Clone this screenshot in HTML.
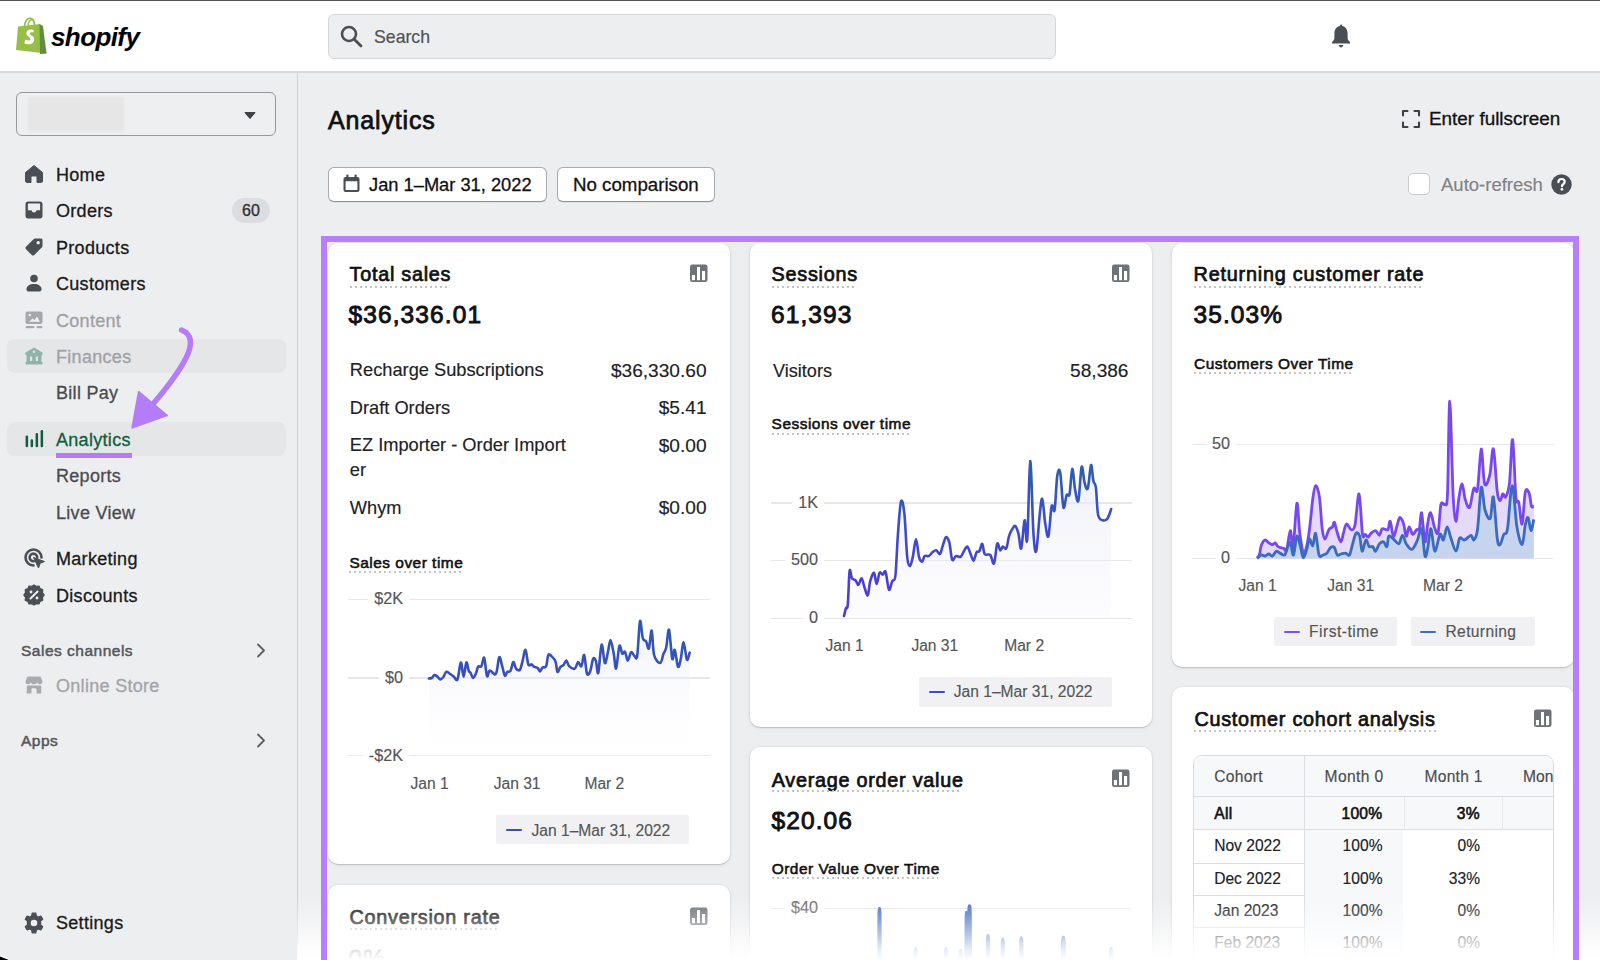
<!DOCTYPE html>
<html><head><meta charset="utf-8">
<style>
*{box-sizing:border-box;margin:0;padding:0}
html,body{width:1600px;height:960px;overflow:hidden}
body{font-family:"Liberation Sans",sans-serif;background:#edeef0;color:#1a1a1a;position:relative}
.abs{position:absolute;white-space:nowrap}
.t{position:absolute;white-space:nowrap;line-height:1;-webkit-text-stroke:0.15px currentColor}
#topline{position:absolute;left:0;top:0;width:1600px;height:1.2px;background:#4f5251}
#header{position:absolute;left:0;top:0;width:1600px;height:73px;background:#fff;border-bottom:2px solid #d9dadc}
#search{position:absolute;left:327.5px;top:13.5px;width:728px;height:45px;background:#edeef0;border:1.5px solid #d5d6d8;border-radius:6px}
#sidebar{position:absolute;left:0;top:73px;width:297.5px;height:887px;background:#edeef0;border-right:1.5px solid #cfd0d2}
.nav{position:absolute;left:56px;font-size:18px;color:#1a1a1a;white-space:nowrap;letter-spacing:0.3px;-webkit-text-stroke:0.3px currentColor}
.ico{position:absolute;left:24px;width:20px;height:20px}
.hl{position:absolute;left:7px;width:279px;height:33.5px;background:#e5e6e8;border-radius:8px}
.btn{position:absolute;height:35px;background:#fff;border:1.2px solid #a9aaad;border-bottom-color:#8f9093;border-radius:6px;box-shadow:0 1px 0 rgba(0,0,0,.05)}
.card{position:absolute;background:#fff;border-radius:10px;box-shadow:0 1px 1px rgba(0,0,0,.13),0 1px 4px rgba(0,0,0,.07),0 0 0 1px rgba(0,0,0,.025)}
.ct{position:absolute;font-size:19.5px;font-weight:700;color:#111;white-space:nowrap;border-bottom:2px dotted #c9c9c9;padding-bottom:1px}
.cv{position:absolute;font-size:26px;font-weight:700;color:#111;white-space:nowrap}
.row{position:absolute;font-size:18px;color:#222;white-space:nowrap}
.sub{position:absolute;font-size:15.5px;font-weight:700;color:#111;white-space:nowrap;border-bottom:2px dotted #cfcfcf}
.axis{position:absolute;font-size:15px;color:#555;white-space:nowrap}
.legend{position:absolute;height:30px;background:#f1f1f2;border-radius:3px;font-size:15.5px;color:#555;white-space:nowrap}
.barico{position:absolute;width:18px;height:18px;background:#6b6e73;border-radius:2px}
#fade{position:absolute;left:297px;top:898px;width:1303px;height:62px;background:linear-gradient(to bottom,rgba(255,255,255,0) 0%,rgba(255,255,255,.28) 30%,rgba(255,255,255,.86) 82%,#fff 100%)}
#purple{position:absolute;left:321px;top:236px;width:1258px;height:740px;border:6px solid #b77ffb}
</style></head>
<body>
<div id="header"></div>
<div id="topline"></div>
<!-- logo -->
<svg class="abs" style="left:15px;top:17px" width="34" height="38" viewBox="0 0 34 38">
  <path d="M3 9.5 L25 7 L31.5 36.5 L1 33 Z" fill="#95bf47"/>
  <path d="M24.5 7 L28 9 L31.5 36.5 L25 37 Z" fill="#5e8e3e"/>
  <path d="M9.5 9 C10 3 13 1 15.5 1.5 C18 2 19.5 5 19.5 8.5" fill="none" stroke="#95bf47" stroke-width="1.8"/>
  <path d="M13 8.5 C13.5 4.5 15 2.8 16.5 3" fill="none" stroke="#95bf47" stroke-width="1.5"/>
  <path d="M19 13.2 C17.8 12.4 16.2 12.2 14.6 12.6 C11.6 13.4 10.6 16.2 12.2 18.4 C13.4 20 15.6 20.6 15.4 22.4 C15.2 23.8 12.8 24 10.4 22.6 L9.2 26.2 C11.6 27.6 15.4 27.8 17.6 26 C20 24 19.6 20.8 17.4 19 C16 17.8 14.6 17.4 14.8 16.2 C15 15.2 16.6 14.8 18.2 15.6 Z" fill="#fff"/>
</svg>
<div class="abs" style="left:51px;top:22px;font-size:26px;font-weight:700;font-style:italic;color:#000;letter-spacing:-0.6px">shopify</div>
<div id="search"></div>
<svg class="abs" style="left:339px;top:24px" width="25" height="25" viewBox="0 0 25 25"><circle cx="10" cy="10" r="7" fill="none" stroke="#4a4f55" stroke-width="2.6"/><path d="M15 15 L22 22" stroke="#4a4f55" stroke-width="2.8" stroke-linecap="round"/></svg>
<div class="abs" style="left:374px;top:26.5px;font-size:17.7px;color:#505357;-webkit-text-stroke:0.2px #505357">Search</div>
<!-- bell -->
<svg class="abs" style="left:1329px;top:23px" width="24" height="26" viewBox="0 0 24 26"><path d="M12 1.5 C12.8 1.5 13 2.2 13 3 C16.5 3.6 18.6 6.6 18.6 10.4 L18.6 15 C18.6 16.8 19.8 18 21 19 L21 20.5 L3 20.5 L3 19 C4.2 18 5.4 16.8 5.4 15 L5.4 10.4 C5.4 6.6 7.5 3.6 11 3 C11 2.2 11.2 1.5 12 1.5 Z" fill="#4a4f55"/><path d="M9.6 22 C10 23.6 11 24.4 12 24.4 C13 24.4 14 23.6 14.4 22 Z" fill="#4a4f55"/></svg>
<div id="sidebar"></div>
<div class="abs" style="left:16px;top:91.5px;width:260px;height:44.5px;border:1.5px solid #97989b;border-radius:6px;background:#eeeff1"></div>
<div class="abs" style="left:28px;top:96.5px;width:96px;height:35.5px;background:#e6e6e7;border-radius:2px;filter:blur(0.8px)"></div>
<svg class="abs" style="left:244px;top:110.5px" width="12" height="9" viewBox="0 0 12 9"><path d="M1.2 1 L10.8 1 C11.4 1 11.6 1.6 11.3 2 L6.6 7.4 C6.3 7.8 5.7 7.8 5.4 7.4 L0.7 2 C0.4 1.6 0.6 1 1.2 1 Z" fill="#3f4247"/></svg>
<div class="hl" style="top:339px"></div>
<div class="hl" style="top:422px"></div>
<!-- icons -->
<svg class="abs" style="left:24px;top:164px" width="20" height="20" viewBox="0 0 20 20"><path d="M10 1.5 L18.5 8.5 L18.5 17 C18.5 18 17.8 18.5 17 18.5 L13 18.5 L13 13 C13 12.3 12.5 12 12 12 L8 12 C7.5 12 7 12.3 7 13 L7 18.5 L3 18.5 C2.2 18.5 1.5 18 1.5 17 L1.5 8.5 Z" fill="#4a4f55" stroke="#4a4f55" stroke-width="1" stroke-linejoin="round"/></svg>
<svg class="abs" style="left:24px;top:200px" width="20" height="20" viewBox="0 0 20 20"><path d="M4 1.5 L16 1.5 C17.5 1.5 18.5 2.5 18.5 4 L18.5 16 C18.5 17.5 17.5 18.5 16 18.5 L4 18.5 C2.5 18.5 1.5 17.5 1.5 16 L1.5 4 C1.5 2.5 2.5 1.5 4 1.5 Z" fill="#4a4f55"/><path d="M4.5 3.6 L15.5 3.6 C15.9 3.6 16.1 3.9 16.1 4.3 L16.1 10.2 L12.6 10.2 C12 11.8 11.1 12.4 10 12.4 C8.9 12.4 8 11.8 7.4 10.2 L3.9 10.2 L3.9 4.3 C3.9 3.9 4.1 3.6 4.5 3.6 Z" fill="#edeef0"/></svg>
<svg class="abs" style="left:24px;top:237px" width="20" height="20" viewBox="0 0 20 20"><path d="M11 1.5 L17 1.5 C17.8 1.5 18.5 2.2 18.5 3 L18.5 9 C18.5 9.5 18.3 9.9 18 10.2 L10.2 18 C9.5 18.7 8.5 18.7 7.8 18 L2 12.2 C1.3 11.5 1.3 10.5 2 9.8 L9.8 2 C10.1 1.7 10.5 1.5 11 1.5 Z" fill="#4a4f55"/><circle cx="14.2" cy="5.8" r="1.7" fill="#edeef0"/></svg>
<svg class="abs" style="left:24px;top:273px" width="20" height="20" viewBox="0 0 20 20"><circle cx="10" cy="5.5" r="3.8" fill="#4a4f55"/><path d="M2.5 16.2 C2.5 13 5.5 11 10 11 C14.5 11 17.5 13 17.5 16.2 C17.5 17.6 16.5 18.5 15 18.5 L5 18.5 C3.5 18.5 2.5 17.6 2.5 16.2 Z" fill="#4a4f55"/></svg>
<svg class="abs" style="left:24px;top:310px" width="20" height="20" viewBox="0 0 20 20"><path d="M3.5 1.5 L16.5 1.5 C17.6 1.5 18.5 2.4 18.5 3.5 L18.5 12 C18.5 13.1 17.6 14 16.5 14 L3.5 14 C2.4 14 1.5 13.1 1.5 12 L1.5 3.5 C1.5 2.4 2.4 1.5 3.5 1.5 Z" fill="#a6a7aa"/><path d="M5 11.8 L8.5 8.5 L10.5 10 L13 6.5 L16 11.8 Z" fill="#edeef0"/><circle cx="5.8" cy="5" r="1.3" fill="#edeef0"/><rect x="1.5" y="16" width="9" height="2.2" rx="1.1" fill="#a6a7aa"/><rect x="12.5" y="16" width="6" height="2.2" rx="1.1" fill="#a6a7aa"/></svg>
<svg class="abs" style="left:24px;top:346px" width="20" height="20" viewBox="0 0 20 20"><path d="M10 1.5 L18.5 6.5 L18.5 9 L1.5 9 L1.5 6.5 Z" fill="#8fb5a8"/><circle cx="10" cy="5.8" r="1.2" fill="#e3e4e6"/><rect x="2.5" y="9" width="15" height="8" fill="#8fb5a8"/><rect x="1.5" y="16" width="17" height="2.5" rx="1" fill="#8fb5a8"/><rect x="6" y="10.5" width="2.2" height="4.5" fill="#e3e4e6"/><rect x="11.8" y="10.5" width="2.2" height="4.5" fill="#e3e4e6"/></svg>
<svg class="abs" style="left:24px;top:429px" width="20" height="20" viewBox="0 0 20 20"><rect x="1.6" y="6.5" width="2.5" height="11.8" rx="1.2" fill="#0f5e3f"/><rect x="6.6" y="10.2" width="2.5" height="8.1" rx="1.2" fill="#0f5e3f"/><rect x="11.6" y="4" width="2.5" height="14.3" rx="1.2" fill="#0f5e3f"/><rect x="16.6" y="1" width="2.5" height="17.3" rx="1.2" fill="#0f5e3f"/></svg>
<svg class="abs" style="left:24px;top:548px" width="22" height="22" viewBox="0 0 22 22"><path d="M9.5 17.5 A8 8 0 1 1 17.5 9.5" fill="none" stroke="#4a4f55" stroke-width="2.6" stroke-linecap="round"/><path d="M9.8 13.2 A3.8 3.8 0 1 1 13.2 9.6" fill="none" stroke="#4a4f55" stroke-width="2.6" stroke-linecap="round"/><path d="M9.5 9.5 L20.5 13.5 L16.2 15.2 L14.5 20 Z" fill="#4a4f55" stroke="#4a4f55" stroke-width="1" stroke-linejoin="round"/></svg>
<svg class="abs" style="left:23px;top:584px" width="22" height="22" viewBox="0 0 22 22"><path d="M11 1 L13.3 2.6 L16 2.2 L17 4.8 L19.6 5.8 L19.3 8.6 L21 11 L19.3 13.4 L19.6 16.2 L17 17.2 L16 19.8 L13.3 19.4 L11 21 L8.7 19.4 L6 19.8 L5 17.2 L2.4 16.2 L2.7 13.4 L1 11 L2.7 8.6 L2.4 5.8 L5 4.8 L6 2.2 L8.7 2.6 Z" fill="#4a4f55" stroke="#4a4f55" stroke-width="1.5" stroke-linejoin="round"/><path d="M7.5 14.5 L14.5 7.5" stroke="#edeef0" stroke-width="2" stroke-linecap="round"/><circle cx="8" cy="8" r="1.4" fill="#edeef0"/><circle cx="14" cy="14" r="1.4" fill="#edeef0"/></svg>
<svg class="abs" style="left:24px;top:675px" width="20" height="20" viewBox="0 0 20 20"><path d="M3.5 1.5 L16.5 1.5 L18.5 6.5 C18.5 8.3 17.3 9.3 16 9.3 C14.6 9.3 13.5 8.3 13.3 7.2 C13 8.3 11.8 9.3 10 9.3 C8.2 9.3 7 8.3 6.7 7.2 C6.5 8.3 5.4 9.3 4 9.3 C2.7 9.3 1.5 8.3 1.5 6.5 Z" fill="#a9aaad"/><path d="M2.8 10.5 L17.2 10.5 L17.2 18.5 L12.6 18.5 L12.6 14.6 C12.6 13.8 12 13.2 11.2 13.2 L8.8 13.2 C8 13.2 7.4 13.8 7.4 14.6 L7.4 18.5 L2.8 18.5 Z" fill="#a9aaad"/></svg>
<svg class="abs" style="left:23px;top:912px" width="22" height="22" viewBox="0 0 22 22"><path d="M9.2 1.2 L12.8 1.2 L13.4 4 L15.2 5 L17.9 4.1 L19.7 7.2 L17.6 9.1 L17.6 12.9 L19.7 14.8 L17.9 17.9 L15.2 17 L13.4 18 L12.8 20.8 L9.2 20.8 L8.6 18 L6.8 17 L4.1 17.9 L2.3 14.8 L4.4 12.9 L4.4 9.1 L2.3 7.2 L4.1 4.1 L6.8 5 L8.6 4 Z" fill="#4a4f55" stroke="#4a4f55" stroke-width="1.2" stroke-linejoin="round"/><circle cx="11" cy="11" r="3.3" fill="#edeef0"/></svg>
<svg class="abs" style="left:256px;top:643px" width="10" height="15" viewBox="0 0 10 15"><path d="M2 1.5 L8 7.5 L2 13.5" fill="none" stroke="#5c5f62" stroke-width="1.8" stroke-linecap="round" stroke-linejoin="round"/></svg>
<svg class="abs" style="left:256px;top:733px" width="10" height="15" viewBox="0 0 10 15"><path d="M2 1.5 L8 7.5 L2 13.5" fill="none" stroke="#5c5f62" stroke-width="1.8" stroke-linecap="round" stroke-linejoin="round"/></svg>
<!-- nav text -->
<div class="nav" style="top:165px">Home</div>
<div class="nav" style="top:201px">Orders</div>
<div class="abs" style="left:232px;top:198px;width:38px;height:25px;border-radius:12.5px;background:#dcdde0;font-size:16px;color:#303030;text-align:center;line-height:25px;-webkit-text-stroke:0.3px #303030">60</div>
<div class="nav" style="top:238px">Products</div>
<div class="nav" style="top:274px">Customers</div>
<div class="nav" style="top:311px;color:#9fa0a3">Content</div>
<div class="nav" style="top:347px;color:#a0a1a4">Finances</div>
<div class="nav" style="top:383px;color:#4a4b4e">Bill Pay</div>
<div class="nav" style="top:430px;color:#0f5e3f">Analytics</div>
<div class="abs" style="left:56px;top:453px;width:76px;height:5px;background:#b57cf8"></div>
<div class="nav" style="top:466px;color:#4a4b4e">Reports</div>
<div class="nav" style="top:503px;color:#4a4b4e">Live View</div>
<div class="nav" style="top:549px">Marketing</div>
<div class="nav" style="top:586px">Discounts</div>
<div class="abs" style="left:21px;top:642px;font-size:15.5px;font-weight:400;color:#55575a;letter-spacing:0.5px;-webkit-text-stroke:0.5px #55575a">Sales channels</div>
<div class="nav" style="top:676px;color:#a3a4a7">Online Store</div>
<div class="abs" style="left:21px;top:732px;font-size:15.5px;font-weight:400;color:#55575a;letter-spacing:0.5px;-webkit-text-stroke:0.5px #55575a">Apps</div>
<div class="nav" style="top:913px">Settings</div>
<!-- arrow -->
<svg class="abs" style="left:120px;top:320px" width="90" height="120" viewBox="0 0 90 120"><path d="M61.5 10 C72 14 73 24 66 38 C58 54 45 70 33 84" fill="none" stroke="#b57cf8" stroke-width="5.5" stroke-linecap="round"/><path d="M18.8 72 L47 95.4 L12.3 107.6 Z" fill="#b57cf8" stroke="#b57cf8" stroke-width="2" stroke-linejoin="round"/></svg>

<!-- main header -->
<div class="abs" style="left:328px;top:106px;font-size:25px;font-weight:400;color:#111;letter-spacing:0.85px;-webkit-text-stroke:0.75px #111">Analytics</div>
<svg class="abs" style="left:1401px;top:109px" width="20" height="20" viewBox="0 0 20 20"><path d="M2 6.5 L2 2 L6.5 2 M13.5 2 L18 2 L18 6.5 M18 13.5 L18 18 L13.5 18 M6.5 18 L2 18 L2 13.5" fill="none" stroke="#3d4045" stroke-width="2.1" stroke-linecap="round" stroke-linejoin="round"/></svg>
<div class="abs" style="left:1429px;top:108px;font-size:18.9px;color:#111;-webkit-text-stroke:0.3px #111">Enter fullscreen</div>
<div class="btn" style="left:328px;top:167px;width:219px"></div>
<svg class="abs" style="left:342px;top:174px" width="19" height="19" viewBox="0 0 19 19"><rect x="1.5" y="3" width="16" height="15" rx="2" fill="#4a4f55"/><rect x="3.6" y="7.2" width="11.8" height="8.8" rx="0.5" fill="#fff"/><rect x="4.3" y="0.5" width="2.2" height="4" rx="1" fill="#4a4f55"/><rect x="12.5" y="0.5" width="2.2" height="4" rx="1" fill="#4a4f55"/></svg>
<div class="abs" style="left:369px;top:174px;font-size:18.3px;color:#111;-webkit-text-stroke:0.3px #111">Jan 1–Mar 31, 2022</div>
<div class="btn" style="left:557px;top:167px;width:158px"></div>
<div class="abs" style="left:573px;top:174px;font-size:18.7px;color:#111;-webkit-text-stroke:0.3px #111">No comparison</div>
<div class="abs" style="left:1408px;top:173px;width:22px;height:22px;border:1.5px solid #c9cacd;border-radius:5px;background:#fff"></div>
<div class="abs" style="left:1441px;top:174px;font-size:18.5px;color:#808184;-webkit-text-stroke:0.15px #808184">Auto-refresh</div>
<svg class="abs" style="left:1551px;top:174px" width="21" height="21" viewBox="0 0 21 21"><circle cx="10.5" cy="10.5" r="10.2" fill="#4a4f55"/><path d="M7.4 8.2 C7.4 6.3 8.8 5 10.6 5 C12.4 5 13.7 6.2 13.7 7.8 C13.7 9.2 12.9 9.8 11.9 10.5 C11.3 10.9 11 11.3 11 12.2" fill="none" stroke="#fff" stroke-width="2.2" stroke-linecap="round"/><circle cx="10.9" cy="15.3" r="1.35" fill="#fff"/></svg>
<!--CARDS-->
<div class="card" style="left:328px;top:243px;width:402px;height:621px"></div>
<div class="card" style="left:328px;top:885px;width:402px;height:200px"></div>
<div class="card" style="left:750px;top:243px;width:402px;height:484px"></div>
<div class="card" style="left:750px;top:747px;width:402px;height:300px"></div>
<div class="card" style="left:1172px;top:243px;width:402px;height:424px"></div>
<div class="card" style="left:1172px;top:687px;width:402px;height:400px"></div>
<div class="t" style="left:349.5px;top:265.4px;font-size:19.8px;font-weight:400;color:#111;-webkit-text-stroke:0.73px currentColor;letter-spacing:0.75px">Total sales</div>
<div class="abs" style="left:349.5px;top:285.7px;width:100.5px;height:2px;background-image:linear-gradient(to right,#c4c5c7 50%,transparent 50%);background-size:5px 2px"></div>
<svg class="abs" style="left:690px;top:264px" width="18" height="18" viewBox="0 0 18 18"><rect x="0" y="0.5" width="17.5" height="17.5" rx="2.2" fill="#6f7378"/><rect x="1.9" y="11" width="3.1" height="5.2" fill="#fff"/><rect x="7" y="3" width="3" height="13.2" fill="#fff"/><rect x="12" y="7" width="3.1" height="9.2" fill="#fff"/></svg>
<div class="t" style="left:348.5px;top:303.1px;font-size:24.5px;font-weight:400;color:#111;-webkit-text-stroke:0.91px currentColor;letter-spacing:1.1px">$36,336.01</div>
<div class="t" style="left:349.8px;top:361.4px;font-size:18.25px;font-weight:400;color:#202124;">Recharge Subscriptions</div>
<div class="t" style="right:893.5px;top:360.6px;font-size:19.1px;font-weight:400;color:#202124;">$36,330.60</div>
<div class="t" style="left:349.8px;top:399.2px;font-size:18.25px;font-weight:400;color:#202124;">Draft Orders</div>
<div class="t" style="right:893.5px;top:398.4px;font-size:19.1px;font-weight:400;color:#202124;">$5.41</div>
<div class="t" style="left:349.8px;top:436.3px;font-size:18.25px;font-weight:400;color:#202124;">EZ Importer - Order Import</div>
<div class="t" style="right:893.5px;top:435.5px;font-size:19.1px;font-weight:400;color:#202124;">$0.00</div>
<div class="t" style="left:349.8px;top:498.9px;font-size:18.25px;font-weight:400;color:#202124;">Whym</div>
<div class="t" style="right:893.5px;top:498.1px;font-size:19.1px;font-weight:400;color:#202124;">$0.00</div>
<div class="t" style="left:349.8px;top:461.4px;font-size:18.25px;font-weight:400;color:#202124;">er</div>
<div class="t" style="left:349.4px;top:554.5px;font-size:15.45px;font-weight:400;color:#111;-webkit-text-stroke:0.57px currentColor;letter-spacing:0.5px">Sales over time</div>
<div class="abs" style="left:349.4px;top:571.0px;width:111.6px;height:2px;background-image:linear-gradient(to right,#c4c5c7 50%,transparent 50%);background-size:5px 2px"></div>
<div class="abs" style="left:348px;top:598.8px;width:362px;height:1.3px;background:#e6e7e9"></div>
<div class="t" style="right:1191px;top:590.0px;padding:0 6px;background:#fff;font-size:16.2px;color:#555">$2K</div>
<div class="abs" style="left:348px;top:677.4px;width:362px;height:1.3px;background:#e6e7e9"></div>
<div class="t" style="right:1191px;top:668.6px;padding:0 6px;background:#fff;font-size:16.2px;color:#555">$0</div>
<div class="abs" style="left:348px;top:755.2px;width:362px;height:1.3px;background:#e6e7e9"></div>
<div class="t" style="right:1191px;top:746.5px;padding:0 6px;background:#fff;font-size:16.2px;color:#555">-$2K</div>
<div class="t" style="left:410.5px;top:775.8px;font-size:15.6px;font-weight:400;color:#555;">Jan 1</div>
<div class="t" style="left:493.7px;top:775.8px;font-size:15.6px;font-weight:400;color:#555;">Jan 31</div>
<div class="t" style="left:584.4px;top:775.8px;font-size:15.6px;font-weight:400;color:#555;">Mar 2</div>
<div class="abs" style="left:496px;top:814.5px;width:193px;height:29.5px;background:#f1f1f3;border-radius:2px"></div>
<div class="abs" style="left:506px;top:828.5px;width:16px;height:2.6px;background:#3b4fc4;border-radius:1px"></div>
<div class="t" style="left:531.5px;top:822.5px;font-size:15.6px;font-weight:400;color:#555;">Jan 1–Mar 31, 2022</div>
<svg class="abs" style="left:340px;top:600px" width="380" height="170" viewBox="0 0 380 170"><defs><linearGradient id="gs" x1="0" y1="0" x2="0" y2="1"><stop offset="0.15" stop-color="#eceef9" stop-opacity="0.55"/><stop offset="1" stop-color="#f5f5fb" stop-opacity="0"/></linearGradient><linearGradient id="ls" gradientUnits="userSpaceOnUse" x1="0" y1="20" x2="0" y2="80"><stop offset="0" stop-color="#2e5bb3"/><stop offset="1" stop-color="#3b4cc0"/></linearGradient></defs><path d="M88.9 78.4 C89.4 78.3 90.8 78.5 91.7 78.0 C92.6 77.5 93.2 75.5 94.1 75.2 C95.0 74.9 95.9 75.4 96.9 76.1 C97.9 76.8 99.1 79.2 100.2 79.4 C101.3 79.5 102.4 78.2 103.4 77.0 C104.4 75.8 105.1 72.4 106.2 71.9 C107.3 71.4 108.7 73.0 110.0 73.8 C111.3 74.5 112.5 75.7 113.8 76.6 C115.0 77.5 116.3 81.7 117.5 79.4 C118.7 77.0 119.8 63.0 120.8 62.5 C121.8 62.0 122.7 76.6 123.6 76.6 C124.5 76.6 125.5 63.4 126.4 62.5 C127.3 61.6 128.0 69.3 128.8 71.0 C129.5 72.7 129.9 71.6 130.6 72.8 C131.3 74.0 132.1 77.8 133.0 78.0 C133.9 78.2 135.0 75.6 135.8 73.8 C136.7 71.9 137.2 68.0 138.1 66.7 C139.0 65.5 140.4 67.7 141.4 66.2 C142.4 64.8 143.3 56.2 144.2 57.8 C145.1 59.4 146.1 74.0 147.0 76.1 C147.9 78.2 148.3 70.9 149.8 70.5 C151.3 70.1 154.3 76.0 155.9 73.8 C157.5 71.5 158.2 58.7 159.2 57.3 C160.2 55.9 161.1 62.2 162.0 65.3 C162.9 68.3 163.9 74.5 164.8 75.6 C165.7 76.7 166.2 72.7 167.2 71.9 C168.1 71.1 169.5 72.5 170.5 70.9 C171.5 69.2 172.4 62.4 173.3 62.0 C174.2 61.6 175.0 67.3 176.1 68.6 C177.2 69.9 178.8 71.0 179.8 70.0 C180.8 69.0 181.3 65.9 182.2 62.5 C183.2 59.1 184.5 49.5 185.5 49.8 C186.5 50.1 187.3 62.0 188.3 64.4 C189.3 66.8 190.7 64.0 191.6 64.4 C192.5 64.8 192.9 66.1 193.9 66.7 C194.9 67.3 196.7 67.3 197.7 68.1 C198.7 68.9 199.2 71.5 200.0 71.4 C200.8 71.3 201.3 68.6 202.3 67.7 C203.3 66.8 205.1 68.4 206.1 66.2 C207.1 64.1 207.4 56.6 208.4 55.0 C209.4 53.4 211.0 55.8 212.2 56.9 C213.4 58.0 214.6 59.1 215.5 61.6 C216.4 64.1 216.7 71.0 217.5 71.9 C218.3 72.8 219.3 68.4 220.3 67.2 C221.3 66.0 222.6 65.9 223.6 64.8 C224.6 63.7 225.5 60.4 226.4 60.6 C227.3 60.8 227.8 64.9 229.2 66.2 C230.6 67.6 233.3 69.3 234.8 68.6 C236.3 67.9 237.0 62.4 238.1 62.0 C239.2 61.6 240.4 67.4 241.4 66.2 C242.4 65.1 243.3 53.8 244.2 55.0 C245.1 56.2 246.0 71.1 247.0 73.8 C248.0 76.4 249.3 73.4 250.3 70.9 C251.3 68.4 252.2 60.4 253.1 58.8 C254.0 57.1 255.0 58.8 255.9 61.1 C256.8 63.4 257.3 75.5 258.3 72.8 C259.2 70.1 260.5 46.3 261.6 44.7 C262.7 43.1 263.8 61.6 264.8 63.0 C265.8 64.4 266.8 56.9 267.7 53.1 C268.7 49.3 269.5 39.9 270.5 40.0 C271.5 40.1 272.8 49.2 273.8 54.0 C274.7 58.8 275.2 69.9 276.1 68.6 C277.0 67.3 278.4 48.6 279.4 46.1 C280.4 43.6 281.3 52.7 282.2 53.6 C283.1 54.5 284.1 50.5 285.0 51.7 C285.9 52.9 286.8 60.5 287.8 60.6 C288.8 60.7 290.0 53.0 291.1 52.2 C292.2 51.4 293.4 55.3 294.4 55.9 C295.4 56.5 296.3 61.7 297.2 55.9 C298.1 50.1 299.1 24.2 300.0 21.2 C300.9 18.3 301.8 34.7 302.8 38.1 C303.8 41.5 305.1 39.7 306.1 41.4 C307.1 43.1 308.0 50.2 308.9 48.4 C309.8 46.6 310.8 29.5 311.7 30.6 C312.6 31.7 312.7 49.6 314.1 55.0 C315.5 60.4 318.7 63.2 320.2 63.0 C321.8 62.8 322.4 56.6 323.4 54.0 C324.4 51.4 325.3 51.5 326.2 47.5 C327.2 43.5 328.0 27.8 329.0 29.7 C330.0 31.6 331.3 55.4 332.3 58.8 C333.2 62.1 333.8 48.5 334.7 49.8 C335.7 51.1 337.0 65.2 338.0 66.7 C339.0 68.2 339.9 62.8 340.8 58.8 C341.7 54.7 342.6 42.1 343.6 42.3 C344.6 42.5 345.9 58.0 346.9 59.7 C347.9 61.4 349.2 53.9 349.7 52.7 L349.7 150 L88.9 150 Z" fill="url(#gs)"/><path d="M88.9 78.4 C89.4 78.3 90.8 78.5 91.7 78.0 C92.6 77.5 93.2 75.5 94.1 75.2 C95.0 74.9 95.9 75.4 96.9 76.1 C97.9 76.8 99.1 79.2 100.2 79.4 C101.3 79.5 102.4 78.2 103.4 77.0 C104.4 75.8 105.1 72.4 106.2 71.9 C107.3 71.4 108.7 73.0 110.0 73.8 C111.3 74.5 112.5 75.7 113.8 76.6 C115.0 77.5 116.3 81.7 117.5 79.4 C118.7 77.0 119.8 63.0 120.8 62.5 C121.8 62.0 122.7 76.6 123.6 76.6 C124.5 76.6 125.5 63.4 126.4 62.5 C127.3 61.6 128.0 69.3 128.8 71.0 C129.5 72.7 129.9 71.6 130.6 72.8 C131.3 74.0 132.1 77.8 133.0 78.0 C133.9 78.2 135.0 75.6 135.8 73.8 C136.7 71.9 137.2 68.0 138.1 66.7 C139.0 65.5 140.4 67.7 141.4 66.2 C142.4 64.8 143.3 56.2 144.2 57.8 C145.1 59.4 146.1 74.0 147.0 76.1 C147.9 78.2 148.3 70.9 149.8 70.5 C151.3 70.1 154.3 76.0 155.9 73.8 C157.5 71.5 158.2 58.7 159.2 57.3 C160.2 55.9 161.1 62.2 162.0 65.3 C162.9 68.3 163.9 74.5 164.8 75.6 C165.7 76.7 166.2 72.7 167.2 71.9 C168.1 71.1 169.5 72.5 170.5 70.9 C171.5 69.2 172.4 62.4 173.3 62.0 C174.2 61.6 175.0 67.3 176.1 68.6 C177.2 69.9 178.8 71.0 179.8 70.0 C180.8 69.0 181.3 65.9 182.2 62.5 C183.2 59.1 184.5 49.5 185.5 49.8 C186.5 50.1 187.3 62.0 188.3 64.4 C189.3 66.8 190.7 64.0 191.6 64.4 C192.5 64.8 192.9 66.1 193.9 66.7 C194.9 67.3 196.7 67.3 197.7 68.1 C198.7 68.9 199.2 71.5 200.0 71.4 C200.8 71.3 201.3 68.6 202.3 67.7 C203.3 66.8 205.1 68.4 206.1 66.2 C207.1 64.1 207.4 56.6 208.4 55.0 C209.4 53.4 211.0 55.8 212.2 56.9 C213.4 58.0 214.6 59.1 215.5 61.6 C216.4 64.1 216.7 71.0 217.5 71.9 C218.3 72.8 219.3 68.4 220.3 67.2 C221.3 66.0 222.6 65.9 223.6 64.8 C224.6 63.7 225.5 60.4 226.4 60.6 C227.3 60.8 227.8 64.9 229.2 66.2 C230.6 67.6 233.3 69.3 234.8 68.6 C236.3 67.9 237.0 62.4 238.1 62.0 C239.2 61.6 240.4 67.4 241.4 66.2 C242.4 65.1 243.3 53.8 244.2 55.0 C245.1 56.2 246.0 71.1 247.0 73.8 C248.0 76.4 249.3 73.4 250.3 70.9 C251.3 68.4 252.2 60.4 253.1 58.8 C254.0 57.1 255.0 58.8 255.9 61.1 C256.8 63.4 257.3 75.5 258.3 72.8 C259.2 70.1 260.5 46.3 261.6 44.7 C262.7 43.1 263.8 61.6 264.8 63.0 C265.8 64.4 266.8 56.9 267.7 53.1 C268.7 49.3 269.5 39.9 270.5 40.0 C271.5 40.1 272.8 49.2 273.8 54.0 C274.7 58.8 275.2 69.9 276.1 68.6 C277.0 67.3 278.4 48.6 279.4 46.1 C280.4 43.6 281.3 52.7 282.2 53.6 C283.1 54.5 284.1 50.5 285.0 51.7 C285.9 52.9 286.8 60.5 287.8 60.6 C288.8 60.7 290.0 53.0 291.1 52.2 C292.2 51.4 293.4 55.3 294.4 55.9 C295.4 56.5 296.3 61.7 297.2 55.9 C298.1 50.1 299.1 24.2 300.0 21.2 C300.9 18.3 301.8 34.7 302.8 38.1 C303.8 41.5 305.1 39.7 306.1 41.4 C307.1 43.1 308.0 50.2 308.9 48.4 C309.8 46.6 310.8 29.5 311.7 30.6 C312.6 31.7 312.7 49.6 314.1 55.0 C315.5 60.4 318.7 63.2 320.2 63.0 C321.8 62.8 322.4 56.6 323.4 54.0 C324.4 51.4 325.3 51.5 326.2 47.5 C327.2 43.5 328.0 27.8 329.0 29.7 C330.0 31.6 331.3 55.4 332.3 58.8 C333.2 62.1 333.8 48.5 334.7 49.8 C335.7 51.1 337.0 65.2 338.0 66.7 C339.0 68.2 339.9 62.8 340.8 58.8 C341.7 54.7 342.6 42.1 343.6 42.3 C344.6 42.5 345.9 58.0 346.9 59.7 C347.9 61.4 349.2 53.9 349.7 52.7" fill="none" stroke="url(#ls)" stroke-width="2.6" stroke-linejoin="round" stroke-linecap="round"/></svg>
<div class="t" style="left:349.5px;top:908.4px;font-size:19.8px;font-weight:400;color:#111;-webkit-text-stroke:0.73px currentColor;letter-spacing:0.75px">Conversion rate</div>
<div class="abs" style="left:349.5px;top:928.3px;width:149.5px;height:2px;background-image:linear-gradient(to right,#c4c5c7 50%,transparent 50%);background-size:5px 2px"></div>
<svg class="abs" style="left:690px;top:907px" width="18" height="18" viewBox="0 0 18 18"><rect x="0" y="0.5" width="17.5" height="17.5" rx="2.2" fill="#6f7378"/><rect x="1.9" y="11" width="3.1" height="5.2" fill="#fff"/><rect x="7" y="3" width="3" height="13.2" fill="#fff"/><rect x="12" y="7" width="3.1" height="9.2" fill="#fff"/></svg>
<div class="t" style="left:348.5px;top:946.8px;font-size:24.5px;font-weight:400;color:#111;-webkit-text-stroke:0.91px currentColor;letter-spacing:1.1px">0%</div>
<div class="t" style="left:771.6px;top:265.4px;font-size:19.8px;font-weight:400;color:#111;-webkit-text-stroke:0.73px currentColor;letter-spacing:0.75px">Sessions</div>
<div class="abs" style="left:771.6px;top:285.7px;width:84.4px;height:2px;background-image:linear-gradient(to right,#c4c5c7 50%,transparent 50%);background-size:5px 2px"></div>
<svg class="abs" style="left:1112px;top:264px" width="18" height="18" viewBox="0 0 18 18"><rect x="0" y="0.5" width="17.5" height="17.5" rx="2.2" fill="#6f7378"/><rect x="1.9" y="11" width="3.1" height="5.2" fill="#fff"/><rect x="7" y="3" width="3" height="13.2" fill="#fff"/><rect x="12" y="7" width="3.1" height="9.2" fill="#fff"/></svg>
<div class="t" style="left:771.0px;top:303.1px;font-size:24.5px;font-weight:400;color:#111;-webkit-text-stroke:0.91px currentColor;letter-spacing:1.1px">61,393</div>
<div class="t" style="left:773.0px;top:361.5px;font-size:18.1px;font-weight:400;color:#202124;">Visitors</div>
<div class="t" style="right:471.5px;top:360.6px;font-size:19.1px;font-weight:400;color:#202124;">58,386</div>
<div class="t" style="left:771.6px;top:416.3px;font-size:15.45px;font-weight:400;color:#111;-webkit-text-stroke:0.57px currentColor;letter-spacing:0.5px">Sessions over time</div>
<div class="abs" style="left:771.6px;top:432.5px;width:138.4px;height:2px;background-image:linear-gradient(to right,#c4c5c7 50%,transparent 50%);background-size:5px 2px"></div>
<div class="abs" style="left:770.5px;top:502.4px;width:361px;height:1.3px;background:#e6e7e9"></div>
<div class="t" style="right:776px;top:493.6px;padding:0 6px;background:#fff;font-size:16.2px;color:#555">1K</div>
<div class="abs" style="left:770.5px;top:559.9px;width:361px;height:1.3px;background:#e6e7e9"></div>
<div class="t" style="right:776px;top:551.1px;padding:0 6px;background:#fff;font-size:16.2px;color:#555">500</div>
<div class="abs" style="left:770.5px;top:617.6px;width:361px;height:1.3px;background:#e6e7e9"></div>
<div class="t" style="right:776px;top:608.9px;padding:0 6px;background:#fff;font-size:16.2px;color:#555">0</div>
<div class="t" style="left:825.5px;top:637.8px;font-size:15.6px;font-weight:400;color:#555;">Jan 1</div>
<div class="t" style="left:911.4px;top:637.8px;font-size:15.6px;font-weight:400;color:#555;">Jan 31</div>
<div class="t" style="left:1004.2px;top:637.8px;font-size:15.6px;font-weight:400;color:#555;">Mar 2</div>
<div class="abs" style="left:918.5px;top:676.5px;width:193.5px;height:30px;background:#f1f1f3;border-radius:2px"></div>
<div class="abs" style="left:928.5px;top:690.5px;width:16px;height:2.6px;background:#3b4fc4;border-radius:1px"></div>
<div class="t" style="left:953.8px;top:684.3px;font-size:15.6px;font-weight:400;color:#555;">Jan 1–Mar 31, 2022</div>
<svg class="abs" style="left:760px;top:450px" width="380" height="180" viewBox="0 0 380 180"><defs><linearGradient id="gs2" x1="0" y1="0" x2="0" y2="1"><stop offset="0" stop-color="#e8eaf8" stop-opacity="0.7"/><stop offset="1" stop-color="#f3f3fb" stop-opacity="0.2"/></linearGradient><linearGradient id="ls2" gradientUnits="userSpaceOnUse" x1="0" y1="20" x2="0" y2="165"><stop offset="0" stop-color="#2f5cb4"/><stop offset="1" stop-color="#5038dc"/></linearGradient></defs><path d="M84.0 166.0 C84.3 164.7 85.3 160.3 85.9 158.4 C86.5 156.5 87.1 160.9 87.8 154.7 C88.4 148.5 88.9 125.4 89.6 121.0 C90.3 116.6 90.9 126.8 91.9 128.4 C92.9 129.9 94.5 129.2 95.6 130.3 C96.7 131.4 97.4 135.3 98.4 135.0 C99.4 134.7 100.6 127.9 101.6 128.4 C102.6 128.9 103.6 135.0 104.6 137.8 C105.6 140.6 106.9 146.4 107.8 145.3 C108.7 144.2 109.2 135.0 110.2 131.2 C111.3 127.5 112.9 122.3 114.0 122.8 C115.1 123.3 115.7 134.0 116.6 134.0 C117.5 134.0 118.6 124.3 119.6 122.8 C120.6 121.2 121.8 124.9 122.8 124.7 C123.8 124.6 124.6 119.4 125.6 121.9 C126.6 124.4 127.9 138.1 129.0 139.7 C130.1 141.3 131.1 133.6 132.2 131.2 C133.3 128.9 134.5 133.1 135.4 125.6 C136.3 118.1 136.9 98.6 137.8 86.2 C138.7 73.9 139.9 55.4 141.0 51.6 C142.1 47.9 143.4 54.5 144.4 63.8 C145.4 73.0 146.3 98.1 147.2 106.9 C148.1 115.6 149.1 116.2 150.0 116.2 C150.9 116.2 151.8 111.4 152.8 106.9 C153.8 102.4 155.0 89.0 156.0 89.0 C157.0 89.0 158.0 103.1 159.0 106.9 C160.0 110.7 161.3 111.8 162.2 111.6 C163.1 111.5 163.5 106.9 164.6 106.0 C165.7 105.1 167.4 106.6 168.8 106.0 C170.1 105.4 171.2 103.2 172.5 102.2 C173.8 101.3 175.0 100.0 176.2 100.3 C177.5 100.6 178.9 104.8 180.0 104.0 C181.1 103.2 181.8 98.4 182.8 95.6 C183.8 92.8 184.9 87.7 186.0 87.2 C187.1 86.7 188.4 89.0 189.4 92.8 C190.4 96.5 191.1 107.5 192.2 109.7 C193.3 111.9 194.6 106.5 196.0 106.0 C197.4 105.5 199.2 107.8 200.6 106.9 C202.0 105.9 203.3 102.0 204.4 100.3 C205.5 98.6 206.3 96.3 207.2 96.6 C208.1 96.9 209.0 99.9 210.0 102.2 C211.0 104.5 212.3 110.6 213.4 110.6 C214.5 110.6 215.6 103.8 216.6 102.2 C217.6 100.6 218.5 102.7 219.4 101.2 C220.3 99.8 221.3 93.3 222.2 93.8 C223.1 94.2 223.4 102.1 224.7 104.0 C226.1 105.9 228.7 103.4 230.3 105.0 C231.8 106.6 232.8 115.3 234.0 113.4 C235.2 111.5 236.2 95.9 237.2 93.8 C238.3 91.6 239.3 99.8 240.2 100.3 C241.2 100.8 241.9 96.9 242.9 96.6 C243.9 96.3 245.2 100.1 246.2 98.4 C247.3 96.7 248.1 89.4 249.0 86.2 C249.9 83.1 250.9 81.4 251.9 79.7 C252.9 78.0 254.2 75.4 255.2 76.0 C256.3 76.6 257.4 79.7 258.4 83.4 C259.4 87.1 260.2 100.6 261.2 98.4 C262.3 96.2 263.6 71.7 264.6 70.3 C265.6 68.9 266.3 99.8 267.2 90.0 C268.2 80.2 269.2 12.5 270.2 11.2 C271.3 10.0 272.4 67.5 273.4 82.5 C274.4 97.5 275.2 104.1 276.2 101.2 C277.3 98.4 278.6 74.4 279.6 65.6 C280.6 56.9 281.3 47.5 282.2 48.8 C283.2 50.0 284.2 66.9 285.2 73.1 C286.3 79.4 287.3 89.1 288.4 86.2 C289.5 83.4 290.6 60.6 291.6 56.2 C292.6 51.9 293.7 65.0 294.6 60.0 C295.5 55.0 296.3 32.5 297.2 26.2 C298.2 20.0 299.2 17.3 300.2 22.5 C301.3 27.7 302.3 53.4 303.4 57.2 C304.5 60.9 305.6 47.2 306.6 45.0 C307.6 42.8 308.7 48.4 309.6 44.0 C310.5 39.6 311.3 19.4 312.2 18.8 C313.2 18.1 314.2 35.0 315.2 40.3 C316.3 45.6 317.3 54.5 318.4 50.6 C319.5 46.7 320.6 19.9 321.6 16.9 C322.6 13.9 323.6 29.2 324.6 32.8 C325.6 36.4 326.7 41.4 327.8 38.4 C328.9 35.4 330.1 16.2 331.0 15.0 C331.9 13.8 332.6 27.2 333.4 31.0 C334.2 34.8 335.1 31.9 335.9 37.5 C336.7 43.1 336.9 59.2 338.1 64.7 C339.2 70.2 341.2 69.7 342.8 70.3 C344.4 70.9 346.1 70.3 347.5 68.4 C348.9 66.5 350.6 60.6 351.2 59.0 L351.25 168 L84 168 Z" fill="url(#gs2)"/><path d="M84.0 166.0 C84.3 164.7 85.3 160.3 85.9 158.4 C86.5 156.5 87.1 160.9 87.8 154.7 C88.4 148.5 88.9 125.4 89.6 121.0 C90.3 116.6 90.9 126.8 91.9 128.4 C92.9 129.9 94.5 129.2 95.6 130.3 C96.7 131.4 97.4 135.3 98.4 135.0 C99.4 134.7 100.6 127.9 101.6 128.4 C102.6 128.9 103.6 135.0 104.6 137.8 C105.6 140.6 106.9 146.4 107.8 145.3 C108.7 144.2 109.2 135.0 110.2 131.2 C111.3 127.5 112.9 122.3 114.0 122.8 C115.1 123.3 115.7 134.0 116.6 134.0 C117.5 134.0 118.6 124.3 119.6 122.8 C120.6 121.2 121.8 124.9 122.8 124.7 C123.8 124.6 124.6 119.4 125.6 121.9 C126.6 124.4 127.9 138.1 129.0 139.7 C130.1 141.3 131.1 133.6 132.2 131.2 C133.3 128.9 134.5 133.1 135.4 125.6 C136.3 118.1 136.9 98.6 137.8 86.2 C138.7 73.9 139.9 55.4 141.0 51.6 C142.1 47.9 143.4 54.5 144.4 63.8 C145.4 73.0 146.3 98.1 147.2 106.9 C148.1 115.6 149.1 116.2 150.0 116.2 C150.9 116.2 151.8 111.4 152.8 106.9 C153.8 102.4 155.0 89.0 156.0 89.0 C157.0 89.0 158.0 103.1 159.0 106.9 C160.0 110.7 161.3 111.8 162.2 111.6 C163.1 111.5 163.5 106.9 164.6 106.0 C165.7 105.1 167.4 106.6 168.8 106.0 C170.1 105.4 171.2 103.2 172.5 102.2 C173.8 101.3 175.0 100.0 176.2 100.3 C177.5 100.6 178.9 104.8 180.0 104.0 C181.1 103.2 181.8 98.4 182.8 95.6 C183.8 92.8 184.9 87.7 186.0 87.2 C187.1 86.7 188.4 89.0 189.4 92.8 C190.4 96.5 191.1 107.5 192.2 109.7 C193.3 111.9 194.6 106.5 196.0 106.0 C197.4 105.5 199.2 107.8 200.6 106.9 C202.0 105.9 203.3 102.0 204.4 100.3 C205.5 98.6 206.3 96.3 207.2 96.6 C208.1 96.9 209.0 99.9 210.0 102.2 C211.0 104.5 212.3 110.6 213.4 110.6 C214.5 110.6 215.6 103.8 216.6 102.2 C217.6 100.6 218.5 102.7 219.4 101.2 C220.3 99.8 221.3 93.3 222.2 93.8 C223.1 94.2 223.4 102.1 224.7 104.0 C226.1 105.9 228.7 103.4 230.3 105.0 C231.8 106.6 232.8 115.3 234.0 113.4 C235.2 111.5 236.2 95.9 237.2 93.8 C238.3 91.6 239.3 99.8 240.2 100.3 C241.2 100.8 241.9 96.9 242.9 96.6 C243.9 96.3 245.2 100.1 246.2 98.4 C247.3 96.7 248.1 89.4 249.0 86.2 C249.9 83.1 250.9 81.4 251.9 79.7 C252.9 78.0 254.2 75.4 255.2 76.0 C256.3 76.6 257.4 79.7 258.4 83.4 C259.4 87.1 260.2 100.6 261.2 98.4 C262.3 96.2 263.6 71.7 264.6 70.3 C265.6 68.9 266.3 99.8 267.2 90.0 C268.2 80.2 269.2 12.5 270.2 11.2 C271.3 10.0 272.4 67.5 273.4 82.5 C274.4 97.5 275.2 104.1 276.2 101.2 C277.3 98.4 278.6 74.4 279.6 65.6 C280.6 56.9 281.3 47.5 282.2 48.8 C283.2 50.0 284.2 66.9 285.2 73.1 C286.3 79.4 287.3 89.1 288.4 86.2 C289.5 83.4 290.6 60.6 291.6 56.2 C292.6 51.9 293.7 65.0 294.6 60.0 C295.5 55.0 296.3 32.5 297.2 26.2 C298.2 20.0 299.2 17.3 300.2 22.5 C301.3 27.7 302.3 53.4 303.4 57.2 C304.5 60.9 305.6 47.2 306.6 45.0 C307.6 42.8 308.7 48.4 309.6 44.0 C310.5 39.6 311.3 19.4 312.2 18.8 C313.2 18.1 314.2 35.0 315.2 40.3 C316.3 45.6 317.3 54.5 318.4 50.6 C319.5 46.7 320.6 19.9 321.6 16.9 C322.6 13.9 323.6 29.2 324.6 32.8 C325.6 36.4 326.7 41.4 327.8 38.4 C328.9 35.4 330.1 16.2 331.0 15.0 C331.9 13.8 332.6 27.2 333.4 31.0 C334.2 34.8 335.1 31.9 335.9 37.5 C336.7 43.1 336.9 59.2 338.1 64.7 C339.2 70.2 341.2 69.7 342.8 70.3 C344.4 70.9 346.1 70.3 347.5 68.4 C348.9 66.5 350.6 60.6 351.2 59.0" fill="none" stroke="url(#ls2)" stroke-width="2.6" stroke-linejoin="round" stroke-linecap="round"/></svg>
<div class="t" style="left:771.7px;top:771.1px;font-size:19.8px;font-weight:400;color:#111;-webkit-text-stroke:0.73px currentColor;letter-spacing:0.75px">Average order value</div>
<div class="abs" style="left:771.7px;top:790.3px;width:188.3px;height:2px;background-image:linear-gradient(to right,#c4c5c7 50%,transparent 50%);background-size:5px 2px"></div>
<svg class="abs" style="left:1112px;top:769px" width="18" height="18" viewBox="0 0 18 18"><rect x="0" y="0.5" width="17.5" height="17.5" rx="2.2" fill="#6f7378"/><rect x="1.9" y="11" width="3.1" height="5.2" fill="#fff"/><rect x="7" y="3" width="3" height="13.2" fill="#fff"/><rect x="12" y="7" width="3.1" height="9.2" fill="#fff"/></svg>
<div class="t" style="left:771.5px;top:808.8px;font-size:24.5px;font-weight:400;color:#111;-webkit-text-stroke:0.91px currentColor;letter-spacing:1.1px">$20.06</div>
<div class="t" style="left:771.7px;top:861.3px;font-size:15.45px;font-weight:400;color:#111;-webkit-text-stroke:0.57px currentColor;letter-spacing:0.5px">Order Value Over Time</div>
<div class="abs" style="left:771.7px;top:877.0px;width:166.3px;height:2px;background-image:linear-gradient(to right,#c4c5c7 50%,transparent 50%);background-size:5px 2px"></div>
<div class="abs" style="left:771px;top:907.5px;width:360px;height:1.3px;background:#e6e7e9"></div>
<div class="t" style="right:776px;top:898.8px;padding:0 6px;background:#fff;font-size:16.2px;color:#707070">$40</div>
<svg class="abs" style="left:760px;top:890px" width="380" height="80" viewBox="0 0 380 80"><path d="M118.5 80 C118.5 20.3 118.5 18.3 119.5 18.3 C120.5 18.3 120.5 20.3 120.5 80" fill="none" stroke="#4a72c9" stroke-width="2.4"/><path d="M205.7 80 C205.7 24.0 205.7 22.0 206.5 22.0 C207.3 22.0 207.3 24.0 207.3 80" fill="none" stroke="#4a72c9" stroke-width="2.4"/><path d="M208.3 80 C208.3 17.4 208.3 15.4 209.5 15.4 C210.7 15.4 210.7 17.4 210.7 80" fill="none" stroke="#4a72c9" stroke-width="2.4"/><path d="M227.0 80 C227.0 47.0 227.0 45.0 228.0 45.0 C229.0 45.0 229.0 47.0 229.0 80" fill="none" stroke="#4a72c9" stroke-width="2.4"/><path d="M241.8 80 C241.8 50.7 241.8 48.7 242.8 48.7 C243.8 48.7 243.8 50.7 243.8 80" fill="none" stroke="#4a72c9" stroke-width="2.4"/><path d="M260.3 80 C260.3 49.5 260.3 47.5 261.3 47.5 C262.3 47.5 262.3 49.5 262.3 80" fill="none" stroke="#4a72c9" stroke-width="2.4"/><path d="M302.0 80 C302.0 48.8 302.0 46.8 303.3 46.8 C304.6 46.8 304.6 48.8 304.6 80" fill="none" stroke="#4a72c9" stroke-width="2.4"/><path d="M154.8 80 C154.8 60.0 154.8 58.0 155.6 58.0 C156.4 58.0 156.4 60.0 156.4 80" fill="none" stroke="#4a72c9" stroke-width="2.4"/><path d="M185.0 80 C185.0 60.0 185.0 58.0 186.0 58.0 C187.0 58.0 187.0 60.0 187.0 80" fill="none" stroke="#4a72c9" stroke-width="2.4"/><path d="M199.9 80 C199.9 62.0 199.9 60.0 200.7 60.0 C201.5 60.0 201.5 62.0 201.5 80" fill="none" stroke="#4a72c9" stroke-width="2.4"/><path d="M350.2 80 C350.2 60.0 350.2 58.0 351.0 58.0 C351.8 58.0 351.8 60.0 351.8 80" fill="none" stroke="#4a72c9" stroke-width="2.4"/></svg>
<div class="t" style="left:1193.6px;top:265.4px;font-size:19.8px;font-weight:400;color:#111;-webkit-text-stroke:0.73px currentColor;letter-spacing:0.8px">Returning customer rate</div>
<div class="abs" style="left:1194.4px;top:285.7px;width:229.6px;height:2px;background-image:linear-gradient(to right,#c4c5c7 50%,transparent 50%);background-size:5px 2px"></div>
<div class="t" style="left:1193.5px;top:303.1px;font-size:24.5px;font-weight:400;color:#111;-webkit-text-stroke:0.91px currentColor;letter-spacing:1.1px">35.03%</div>
<div class="t" style="left:1194.0px;top:356.1px;font-size:15.45px;font-weight:400;color:#111;-webkit-text-stroke:0.57px currentColor;letter-spacing:0.5px">Customers Over Time</div>
<div class="abs" style="left:1194.0px;top:372.0px;width:159.0px;height:2px;background-image:linear-gradient(to right,#c4c5c7 50%,transparent 50%);background-size:5px 2px"></div>
<div class="abs" style="left:1192.5px;top:443.6px;width:361px;height:1.3px;background:#e6e7e9"></div>
<div class="t" style="right:364px;top:434.8px;padding:0 6px;background:#fff;font-size:16.2px;color:#555">50</div>
<div class="abs" style="left:1192.5px;top:557.5px;width:361px;height:1.3px;background:#e6e7e9"></div>
<div class="t" style="right:364px;top:548.7px;padding:0 6px;background:#fff;font-size:16.2px;color:#555">0</div>
<div class="t" style="left:1238.5px;top:577.8px;font-size:15.6px;font-weight:400;color:#555;">Jan 1</div>
<div class="t" style="left:1327.3px;top:577.8px;font-size:15.6px;font-weight:400;color:#555;">Jan 31</div>
<div class="t" style="left:1423.0px;top:577.8px;font-size:15.6px;font-weight:400;color:#555;">Mar 2</div>
<div class="abs" style="left:1274px;top:617px;width:123px;height:29px;background:#f1f1f3;border-radius:2px"></div>
<div class="abs" style="left:1284px;top:630.5px;width:16px;height:2.6px;background:#7a4ef2;border-radius:1px"></div>
<div class="t" style="left:1309.0px;top:624.3px;font-size:15.6px;font-weight:400;color:#555;letter-spacing:0.5px">First-time</div>
<div class="abs" style="left:1410.5px;top:617px;width:124px;height:29px;background:#f1f1f3;border-radius:2px"></div>
<div class="abs" style="left:1420px;top:630.5px;width:16px;height:2.6px;background:#3d6cc2;border-radius:1px"></div>
<div class="t" style="left:1445.5px;top:624.3px;font-size:15.6px;font-weight:400;color:#555;letter-spacing:0.35px">Returning</div>
<svg class="abs" style="left:1250px;top:390px" width="300" height="180" viewBox="0 0 300 180"><path d="M7.1 167.8 C7.5 167.3 8.7 167.0 9.4 165.0 C10.1 163.0 10.3 158.1 11.2 155.6 C12.2 153.1 13.8 150.5 15.0 150.0 C16.2 149.5 17.5 152.0 18.8 152.8 C20.0 153.6 21.4 154.7 22.5 154.7 C23.6 154.7 24.4 152.5 25.3 152.8 C26.2 153.1 26.7 155.7 28.1 156.6 C29.5 157.5 32.3 157.8 33.8 158.4 C35.2 159.0 35.5 163.3 36.6 160.3 C37.7 157.3 39.2 141.1 40.3 140.6 C41.4 140.1 42.0 162.0 43.1 157.5 C44.2 153.0 45.8 115.9 46.9 113.4 C48.0 110.9 48.6 134.2 49.7 142.5 C50.8 150.8 52.2 161.2 53.4 163.1 C54.7 165.0 56.1 158.4 57.2 153.8 C58.3 149.1 59.1 142.5 60.0 135.0 C60.9 127.5 61.9 115.3 62.8 108.8 C63.7 102.2 64.5 95.9 65.6 95.6 C66.7 95.3 68.3 99.7 69.4 106.9 C70.5 114.1 71.3 131.7 72.2 138.8 C73.1 145.8 73.9 148.8 75.0 149.0 C76.1 149.2 77.5 141.7 78.8 139.7 C80.0 137.7 81.6 138.1 82.5 136.9 C83.4 135.6 83.6 131.3 84.4 132.2 C85.2 133.1 86.1 139.2 87.2 142.5 C88.3 145.8 89.8 152.0 90.9 151.9 C92.0 151.7 92.8 144.6 93.8 141.6 C94.7 138.6 95.3 134.3 96.6 134.0 C97.8 133.7 99.8 139.5 101.2 139.7 C102.7 139.9 103.7 141.0 105.0 135.0 C106.3 129.0 107.8 102.4 109.1 104.0 C110.3 105.6 111.5 137.7 112.5 144.4 C113.5 151.1 114.4 143.9 115.3 144.4 C116.2 144.9 117.2 147.4 118.1 147.2 C119.0 147.0 119.7 144.5 120.9 143.4 C122.2 142.3 124.2 140.3 125.6 140.6 C127.0 140.9 128.3 145.6 129.4 145.3 C130.5 145.0 130.8 139.7 132.2 138.8 C133.6 137.8 136.5 141.0 137.8 139.7 C139.1 138.5 139.3 130.2 140.2 131.2 C141.2 132.3 142.2 145.6 143.4 146.2 C144.6 146.9 146.2 138.1 147.2 135.0 C148.3 131.9 148.7 127.8 149.7 127.5 C150.7 127.2 152.3 130.0 153.4 133.1 C154.5 136.2 155.3 145.6 156.2 146.2 C157.2 146.9 158.0 137.2 159.1 136.9 C160.2 136.6 161.5 143.9 162.8 144.4 C164.0 144.9 165.5 140.6 166.6 139.7 C167.7 138.8 168.6 141.6 169.4 138.8 C170.2 135.9 170.7 120.6 171.6 122.8 C172.5 125.0 174.0 150.2 175.0 151.9 C176.0 153.6 176.9 138.0 177.8 133.1 C178.7 128.3 179.5 122.2 180.6 122.8 C181.7 123.4 183.2 133.6 184.4 136.9 C185.7 140.2 187.0 146.2 188.1 142.5 C189.2 138.8 189.8 119.1 190.9 114.4 C192.0 109.7 193.6 116.1 194.7 114.4 C195.8 112.7 196.7 121.2 197.5 104.0 C198.3 86.8 198.8 11.1 199.8 11.2 C200.7 11.4 202.1 85.0 203.1 105.0 C204.1 125.0 205.0 130.6 205.9 131.2 C206.8 131.9 207.7 115.0 208.8 108.8 C209.8 102.5 211.0 93.6 212.1 93.8 C213.2 93.9 214.0 105.8 215.3 109.7 C216.5 113.6 218.2 119.1 219.6 117.2 C221.0 115.3 222.4 101.4 223.8 98.4 C225.1 95.4 226.2 106.0 227.5 99.4 C228.8 92.8 230.1 59.9 231.2 59.0 C232.4 58.1 233.2 89.4 234.6 93.8 C236.0 98.1 238.2 91.1 239.7 85.3 C241.2 79.5 242.2 56.3 243.4 59.0 C244.7 61.7 246.1 92.6 247.2 101.2 C248.3 109.9 249.1 110.1 250.0 110.6 C250.9 111.1 251.9 104.6 252.8 104.0 C253.7 103.4 254.5 108.6 255.6 106.9 C256.7 105.2 258.2 103.3 259.4 93.8 C260.6 84.2 261.5 47.5 262.6 49.7 C263.7 51.9 264.9 96.4 265.9 106.9 C266.9 117.4 267.7 108.0 268.8 112.5 C269.8 117.0 271.0 135.7 272.1 134.0 C273.2 132.3 274.1 107.3 275.3 102.2 C276.5 97.0 278.1 100.8 279.1 103.1 C280.1 105.4 280.7 114.1 281.5 116.2 C282.3 118.4 283.4 116.2 283.8 116.2 L283.75 168.39999999999998 L7.1 168.39999999999998 Z" fill="#e6dafc"/><path d="M7.1 168.4 C7.8 167.8 9.9 165.4 11.2 165.0 C12.6 164.6 13.8 166.2 15.0 166.0 C16.2 165.8 17.5 164.0 18.8 164.0 C20.0 164.0 21.2 166.5 22.5 166.0 C23.8 165.5 25.0 161.7 26.2 161.2 C27.5 160.8 28.6 162.5 30.0 163.1 C31.4 163.7 33.5 165.9 34.7 165.0 C36.0 164.1 36.6 159.5 37.5 157.5 C38.4 155.5 39.3 151.5 40.3 152.8 C41.3 154.0 42.4 166.1 43.5 165.0 C44.6 163.9 45.8 147.8 46.9 146.2 C48.0 144.7 49.2 152.0 50.2 155.6 C51.3 159.2 52.2 167.5 53.4 167.8 C54.6 168.1 56.2 160.6 57.2 157.5 C58.2 154.4 58.7 149.3 59.6 149.0 C60.5 148.7 61.8 156.5 62.8 155.6 C63.8 154.7 64.6 141.8 65.6 143.4 C66.6 145.0 67.8 161.4 69.0 165.0 C70.2 168.6 71.8 165.3 73.1 165.0 C74.4 164.7 75.7 164.4 76.9 163.1 C78.2 161.9 79.3 158.4 80.6 157.5 C81.8 156.6 83.3 156.2 84.4 157.5 C85.5 158.8 86.1 163.9 87.2 165.0 C88.3 166.1 89.5 164.3 90.9 164.0 C92.3 163.7 94.2 162.9 95.6 163.1 C97.0 163.3 98.3 166.2 99.4 165.0 C100.5 163.8 101.1 159.2 102.2 155.6 C103.3 152.0 104.7 145.0 105.9 143.4 C107.2 141.8 108.7 143.3 109.7 146.2 C110.7 149.2 111.1 160.6 112.1 161.2 C113.1 161.9 114.7 150.8 115.9 150.0 C117.1 149.2 117.9 155.5 119.1 156.6 C120.2 157.7 121.7 155.8 122.8 156.6 C123.9 157.4 124.5 161.7 125.6 161.2 C126.7 160.8 128.1 155.3 129.4 153.8 C130.7 152.2 132.2 151.4 133.5 151.9 C134.8 152.4 136.0 157.5 136.9 156.6 C137.8 155.7 137.7 147.5 138.8 146.2 C139.8 145.0 141.7 147.8 143.4 149.0 C145.1 150.2 147.2 154.4 148.8 153.8 C150.3 153.1 151.2 145.3 152.5 145.3 C153.8 145.3 154.7 151.4 156.2 153.8 C157.8 156.1 160.0 160.0 161.9 159.4 C163.8 158.8 165.9 153.4 167.5 150.0 C169.1 146.6 170.3 136.1 171.6 138.8 C172.8 141.4 174.0 162.9 175.0 166.0 C176.0 169.1 176.8 162.0 177.8 157.5 C178.8 153.0 179.8 138.1 181.0 138.8 C182.2 139.4 183.2 160.3 184.8 161.2 C186.2 162.2 188.6 146.3 190.0 144.4 C191.4 142.5 192.2 151.2 193.4 150.0 C194.6 148.8 195.8 137.2 197.1 136.9 C198.3 136.6 199.4 144.0 200.9 148.1 C202.4 152.2 204.5 161.2 206.0 161.2 C207.5 161.2 208.3 150.0 209.7 148.1 C211.1 146.2 212.5 150.5 214.4 150.0 C216.3 149.5 219.4 145.3 221.0 145.3 C222.6 145.3 222.7 150.9 223.8 150.0 C224.8 149.1 226.2 148.5 227.5 139.7 C228.8 131.0 230.0 100.8 231.2 97.5 C232.5 94.2 233.5 114.9 235.0 120.0 C236.5 125.1 238.8 130.6 240.2 128.4 C241.7 126.2 242.2 103.6 243.4 106.9 C244.6 110.2 246.1 140.1 247.2 148.1 C248.3 156.1 248.9 155.3 250.0 154.7 C251.1 154.1 252.5 147.1 253.8 144.4 C255.0 141.7 256.1 146.9 257.5 138.8 C258.9 130.6 260.6 95.9 262.2 95.6 C263.8 95.3 265.3 127.0 266.9 136.9 C268.6 146.7 270.7 155.0 272.1 154.7 C273.5 154.4 274.3 139.5 275.3 135.0 C276.3 130.5 277.1 126.6 278.1 127.5 C279.0 128.4 280.1 140.3 281.0 140.6 C281.9 140.9 283.3 131.3 283.8 129.4 L283.75 168.39999999999998 L7.1 168.39999999999998 Z" fill="#c7d4ee"/><path d="M7.1 167.8 C7.5 167.3 8.7 167.0 9.4 165.0 C10.1 163.0 10.3 158.1 11.2 155.6 C12.2 153.1 13.8 150.5 15.0 150.0 C16.2 149.5 17.5 152.0 18.8 152.8 C20.0 153.6 21.4 154.7 22.5 154.7 C23.6 154.7 24.4 152.5 25.3 152.8 C26.2 153.1 26.7 155.7 28.1 156.6 C29.5 157.5 32.3 157.8 33.8 158.4 C35.2 159.0 35.5 163.3 36.6 160.3 C37.7 157.3 39.2 141.1 40.3 140.6 C41.4 140.1 42.0 162.0 43.1 157.5 C44.2 153.0 45.8 115.9 46.9 113.4 C48.0 110.9 48.6 134.2 49.7 142.5 C50.8 150.8 52.2 161.2 53.4 163.1 C54.7 165.0 56.1 158.4 57.2 153.8 C58.3 149.1 59.1 142.5 60.0 135.0 C60.9 127.5 61.9 115.3 62.8 108.8 C63.7 102.2 64.5 95.9 65.6 95.6 C66.7 95.3 68.3 99.7 69.4 106.9 C70.5 114.1 71.3 131.7 72.2 138.8 C73.1 145.8 73.9 148.8 75.0 149.0 C76.1 149.2 77.5 141.7 78.8 139.7 C80.0 137.7 81.6 138.1 82.5 136.9 C83.4 135.6 83.6 131.3 84.4 132.2 C85.2 133.1 86.1 139.2 87.2 142.5 C88.3 145.8 89.8 152.0 90.9 151.9 C92.0 151.7 92.8 144.6 93.8 141.6 C94.7 138.6 95.3 134.3 96.6 134.0 C97.8 133.7 99.8 139.5 101.2 139.7 C102.7 139.9 103.7 141.0 105.0 135.0 C106.3 129.0 107.8 102.4 109.1 104.0 C110.3 105.6 111.5 137.7 112.5 144.4 C113.5 151.1 114.4 143.9 115.3 144.4 C116.2 144.9 117.2 147.4 118.1 147.2 C119.0 147.0 119.7 144.5 120.9 143.4 C122.2 142.3 124.2 140.3 125.6 140.6 C127.0 140.9 128.3 145.6 129.4 145.3 C130.5 145.0 130.8 139.7 132.2 138.8 C133.6 137.8 136.5 141.0 137.8 139.7 C139.1 138.5 139.3 130.2 140.2 131.2 C141.2 132.3 142.2 145.6 143.4 146.2 C144.6 146.9 146.2 138.1 147.2 135.0 C148.3 131.9 148.7 127.8 149.7 127.5 C150.7 127.2 152.3 130.0 153.4 133.1 C154.5 136.2 155.3 145.6 156.2 146.2 C157.2 146.9 158.0 137.2 159.1 136.9 C160.2 136.6 161.5 143.9 162.8 144.4 C164.0 144.9 165.5 140.6 166.6 139.7 C167.7 138.8 168.6 141.6 169.4 138.8 C170.2 135.9 170.7 120.6 171.6 122.8 C172.5 125.0 174.0 150.2 175.0 151.9 C176.0 153.6 176.9 138.0 177.8 133.1 C178.7 128.3 179.5 122.2 180.6 122.8 C181.7 123.4 183.2 133.6 184.4 136.9 C185.7 140.2 187.0 146.2 188.1 142.5 C189.2 138.8 189.8 119.1 190.9 114.4 C192.0 109.7 193.6 116.1 194.7 114.4 C195.8 112.7 196.7 121.2 197.5 104.0 C198.3 86.8 198.8 11.1 199.8 11.2 C200.7 11.4 202.1 85.0 203.1 105.0 C204.1 125.0 205.0 130.6 205.9 131.2 C206.8 131.9 207.7 115.0 208.8 108.8 C209.8 102.5 211.0 93.6 212.1 93.8 C213.2 93.9 214.0 105.8 215.3 109.7 C216.5 113.6 218.2 119.1 219.6 117.2 C221.0 115.3 222.4 101.4 223.8 98.4 C225.1 95.4 226.2 106.0 227.5 99.4 C228.8 92.8 230.1 59.9 231.2 59.0 C232.4 58.1 233.2 89.4 234.6 93.8 C236.0 98.1 238.2 91.1 239.7 85.3 C241.2 79.5 242.2 56.3 243.4 59.0 C244.7 61.7 246.1 92.6 247.2 101.2 C248.3 109.9 249.1 110.1 250.0 110.6 C250.9 111.1 251.9 104.6 252.8 104.0 C253.7 103.4 254.5 108.6 255.6 106.9 C256.7 105.2 258.2 103.3 259.4 93.8 C260.6 84.2 261.5 47.5 262.6 49.7 C263.7 51.9 264.9 96.4 265.9 106.9 C266.9 117.4 267.7 108.0 268.8 112.5 C269.8 117.0 271.0 135.7 272.1 134.0 C273.2 132.3 274.1 107.3 275.3 102.2 C276.5 97.0 278.1 100.8 279.1 103.1 C280.1 105.4 280.7 114.1 281.5 116.2 C282.3 118.4 283.4 116.2 283.8 116.2" fill="none" stroke="#7747f1" stroke-width="2.8" stroke-linejoin="round"/><path d="M7.1 168.4 C7.8 167.8 9.9 165.4 11.2 165.0 C12.6 164.6 13.8 166.2 15.0 166.0 C16.2 165.8 17.5 164.0 18.8 164.0 C20.0 164.0 21.2 166.5 22.5 166.0 C23.8 165.5 25.0 161.7 26.2 161.2 C27.5 160.8 28.6 162.5 30.0 163.1 C31.4 163.7 33.5 165.9 34.7 165.0 C36.0 164.1 36.6 159.5 37.5 157.5 C38.4 155.5 39.3 151.5 40.3 152.8 C41.3 154.0 42.4 166.1 43.5 165.0 C44.6 163.9 45.8 147.8 46.9 146.2 C48.0 144.7 49.2 152.0 50.2 155.6 C51.3 159.2 52.2 167.5 53.4 167.8 C54.6 168.1 56.2 160.6 57.2 157.5 C58.2 154.4 58.7 149.3 59.6 149.0 C60.5 148.7 61.8 156.5 62.8 155.6 C63.8 154.7 64.6 141.8 65.6 143.4 C66.6 145.0 67.8 161.4 69.0 165.0 C70.2 168.6 71.8 165.3 73.1 165.0 C74.4 164.7 75.7 164.4 76.9 163.1 C78.2 161.9 79.3 158.4 80.6 157.5 C81.8 156.6 83.3 156.2 84.4 157.5 C85.5 158.8 86.1 163.9 87.2 165.0 C88.3 166.1 89.5 164.3 90.9 164.0 C92.3 163.7 94.2 162.9 95.6 163.1 C97.0 163.3 98.3 166.2 99.4 165.0 C100.5 163.8 101.1 159.2 102.2 155.6 C103.3 152.0 104.7 145.0 105.9 143.4 C107.2 141.8 108.7 143.3 109.7 146.2 C110.7 149.2 111.1 160.6 112.1 161.2 C113.1 161.9 114.7 150.8 115.9 150.0 C117.1 149.2 117.9 155.5 119.1 156.6 C120.2 157.7 121.7 155.8 122.8 156.6 C123.9 157.4 124.5 161.7 125.6 161.2 C126.7 160.8 128.1 155.3 129.4 153.8 C130.7 152.2 132.2 151.4 133.5 151.9 C134.8 152.4 136.0 157.5 136.9 156.6 C137.8 155.7 137.7 147.5 138.8 146.2 C139.8 145.0 141.7 147.8 143.4 149.0 C145.1 150.2 147.2 154.4 148.8 153.8 C150.3 153.1 151.2 145.3 152.5 145.3 C153.8 145.3 154.7 151.4 156.2 153.8 C157.8 156.1 160.0 160.0 161.9 159.4 C163.8 158.8 165.9 153.4 167.5 150.0 C169.1 146.6 170.3 136.1 171.6 138.8 C172.8 141.4 174.0 162.9 175.0 166.0 C176.0 169.1 176.8 162.0 177.8 157.5 C178.8 153.0 179.8 138.1 181.0 138.8 C182.2 139.4 183.2 160.3 184.8 161.2 C186.2 162.2 188.6 146.3 190.0 144.4 C191.4 142.5 192.2 151.2 193.4 150.0 C194.6 148.8 195.8 137.2 197.1 136.9 C198.3 136.6 199.4 144.0 200.9 148.1 C202.4 152.2 204.5 161.2 206.0 161.2 C207.5 161.2 208.3 150.0 209.7 148.1 C211.1 146.2 212.5 150.5 214.4 150.0 C216.3 149.5 219.4 145.3 221.0 145.3 C222.6 145.3 222.7 150.9 223.8 150.0 C224.8 149.1 226.2 148.5 227.5 139.7 C228.8 131.0 230.0 100.8 231.2 97.5 C232.5 94.2 233.5 114.9 235.0 120.0 C236.5 125.1 238.8 130.6 240.2 128.4 C241.7 126.2 242.2 103.6 243.4 106.9 C244.6 110.2 246.1 140.1 247.2 148.1 C248.3 156.1 248.9 155.3 250.0 154.7 C251.1 154.1 252.5 147.1 253.8 144.4 C255.0 141.7 256.1 146.9 257.5 138.8 C258.9 130.6 260.6 95.9 262.2 95.6 C263.8 95.3 265.3 127.0 266.9 136.9 C268.6 146.7 270.7 155.0 272.1 154.7 C273.5 154.4 274.3 139.5 275.3 135.0 C276.3 130.5 277.1 126.6 278.1 127.5 C279.0 128.4 280.1 140.3 281.0 140.6 C281.9 140.9 283.3 131.3 283.8 129.4" fill="none" stroke="#3a6bbf" stroke-width="2.8" stroke-linejoin="round"/></svg>
<div class="t" style="left:1194.4px;top:710.0px;font-size:19.8px;font-weight:400;color:#111;-webkit-text-stroke:0.73px currentColor;letter-spacing:0.75px">Customer cohort analysis</div>
<div class="abs" style="left:1194.4px;top:730.0px;width:241.6px;height:2px;background-image:linear-gradient(to right,#c4c5c7 50%,transparent 50%);background-size:5px 2px"></div>
<svg class="abs" style="left:1534px;top:709px" width="18" height="18" viewBox="0 0 18 18"><rect x="0" y="0.5" width="17.5" height="17.5" rx="2.2" fill="#6f7378"/><rect x="1.9" y="11" width="3.1" height="5.2" fill="#fff"/><rect x="7" y="3" width="3" height="13.2" fill="#fff"/><rect x="12" y="7" width="3.1" height="9.2" fill="#fff"/></svg>
<div class="abs" style="left:1192.5px;top:754.5px;width:361.5px;height:260px;border:1.5px solid #d9dadc;border-radius:9px;overflow:hidden;background:#fff"><div class="abs" style="left:0;top:0;width:362px;height:41px;background:#f7f8f9;border-bottom:1.5px solid #dcdde0"></div><div class="abs" style="left:0;top:41px;width:362px;height:33.5px;background:#f7f8f9;border-bottom:1.5px solid #dcdde0"></div><div class="abs" style="left:110px;top:0;width:1.5px;height:260px;background:#dcdde0"></div><div class="abs" style="left:0;top:107px;width:110px;height:1.5px;background:#dcdde0"></div><div class="abs" style="left:0;top:139px;width:110px;height:1.5px;background:#dcdde0"></div><div class="abs" style="left:0;top:171px;width:110px;height:1.5px;background:#dcdde0"></div><div class="abs" style="left:111.5px;top:74.5px;width:98px;height:190px;background:#f6f8fa"></div><div class="abs" style="left:210px;top:41px;width:1.5px;height:33px;background:#e6e7e9"></div><div class="abs" style="left:308px;top:41px;width:1.5px;height:33px;background:#e6e7e9"></div></div>
<div class="t" style="left:1214.2px;top:768.5px;font-size:15.6px;font-weight:400;color:#4a4b4e;letter-spacing:0.3px">Cohort</div>
<div class="t" style="left:1324.5px;top:768.5px;font-size:15.6px;font-weight:400;color:#4a4b4e;letter-spacing:0.4px">Month 0</div>
<div class="t" style="left:1424.5px;top:768.5px;font-size:15.6px;font-weight:400;color:#4a4b4e;letter-spacing:0.25px">Month 1</div>
<div class="t" style="left:1523.0px;top:768.5px;font-size:15.6px;font-weight:400;color:#4a4b4e;">Mon</div>
<div class="t" style="left:1214.2px;top:806.2px;font-size:15.6px;font-weight:400;color:#111;-webkit-text-stroke:0.58px currentColor;letter-spacing:0.3px">All</div>
<div class="t" style="right:217.5px;top:806.2px;font-size:15.6px;font-weight:400;color:#111;-webkit-text-stroke:0.58px currentColor;letter-spacing:0.3px">100%</div>
<div class="t" style="right:120.0px;top:806.2px;font-size:15.6px;font-weight:400;color:#111;-webkit-text-stroke:0.58px currentColor;letter-spacing:0.3px">3%</div>
<div class="t" style="left:1214.2px;top:838.1px;font-size:15.6px;font-weight:400;color:#202124;">Nov 2022</div>
<div class="t" style="right:217.5px;top:838.1px;font-size:15.6px;font-weight:400;color:#202124;">100%</div>
<div class="t" style="right:120.0px;top:838.1px;font-size:15.6px;font-weight:400;color:#202124;">0%</div>
<div class="t" style="left:1214.2px;top:870.8px;font-size:15.6px;font-weight:400;color:#202124;">Dec 2022</div>
<div class="t" style="right:217.5px;top:870.8px;font-size:15.6px;font-weight:400;color:#202124;">100%</div>
<div class="t" style="right:120.0px;top:870.8px;font-size:15.6px;font-weight:400;color:#202124;">33%</div>
<div class="t" style="left:1214.2px;top:903.0px;font-size:15.6px;font-weight:400;color:#202124;">Jan 2023</div>
<div class="t" style="right:217.5px;top:903.0px;font-size:15.6px;font-weight:400;color:#202124;">100%</div>
<div class="t" style="right:120.0px;top:903.0px;font-size:15.6px;font-weight:400;color:#202124;">0%</div>
<div class="t" style="left:1214.2px;top:935.4px;font-size:15.6px;font-weight:400;color:#202124;">Feb 2023</div>
<div class="t" style="right:217.5px;top:935.4px;font-size:15.6px;font-weight:400;color:#202124;">100%</div>
<div class="t" style="right:120.0px;top:935.4px;font-size:15.6px;font-weight:400;color:#202124;">0%</div>
<div id="fade"></div>
<div id="purple"></div>
<!--/CARDS-->
<svg class="abs" style="left:0;top:950px" width="14" height="10" viewBox="0 0 14 10"><path d="M0 6.5 C3 7.5 6 9 9 10 L0 10 Z" fill="#000"/><path d="M0 5.5 C3 6.5 6 8 9.5 9.5" fill="none" stroke="#fff" stroke-width="1" opacity="0.9"/></svg>
</body></html>
